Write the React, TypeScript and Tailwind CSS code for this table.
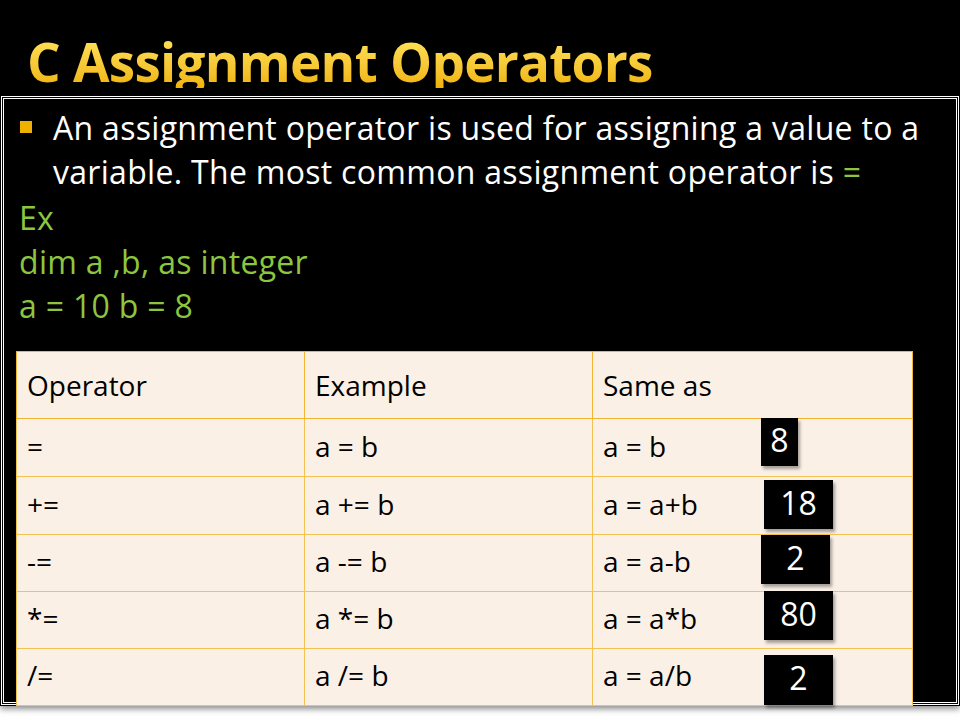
const rows = [
  { op: "=", ex: "a = b", same: "a = b", h: "h-[58px]" },
  { op: "+=", ex: "a += b", same: "a = a+b", h: "h-[58px]" },
  { op: "-=", ex: "a -= b", same: "a = a-b", h: "h-[57px]" },
  { op: "*=", ex: "a *= b", same: "a = a*b", h: "h-[57px]" },
  { op: "/=", ex: "a /= b", same: "a = a/b", h: "h-[57px]" },
];

const Box = ({ value, className }: { value: string; className: string }) => (
  <div
    className={`absolute flex items-center justify-center bg-black text-white text-[32px] leading-none shadow-[2px_3px_3px_rgba(0,0,0,0.35)] ${className}`}
  >
    <span className="-mt-[4px]">{value}</span>
  </div>
);

const App = () => {
  return (
    <div className="w-[960px] h-[720px] bg-white overflow-hidden font-['Open_Sans','Lato',sans-serif]">
      <div className="h-[706px] bg-black shadow-[0_3px_6px_rgba(0,0,0,0.45)]">
        <div className="h-[96px] pt-[35px] pl-[27px]">
          <h1 className="text-[53px] leading-none font-bold tracking-[-0.75px] bg-gradient-to-b from-[#ffe45a] to-[#f0b400] bg-clip-text text-transparent">
            C Assignment Operators
          </h1>
        </div>

        <div className="ml-[1px] w-[958px] h-[609px] border-[3px] border-double border-white pt-[7px]">
          <div className="flex text-white text-[32px] leading-[44px] tracking-[0.3px]">
            <div className="w-[49px] shrink-0 pl-[16px] pt-[15px]">
              <div className="w-[12px] h-[12px] bg-[#f0b000]" />
            </div>
            <p>
              An assignment operator is used for assigning a value to a variable. The most common
              assignment operator is <span className="text-[#8cc63f]">=</span>
            </p>
          </div>

          <div className="mt-[2px] pl-[15px] text-[#8cc63f] text-[32px] leading-[44px] tracking-[0.3px]">
            <div>Ex</div>
            <div>dim a ,b, as integer</div>
            <div>a = 10 b = 8</div>
          </div>

          <div className="relative mt-[23px] ml-[12px] w-[896px]">
            <table className="w-[896px] border-collapse table-fixed bg-[#fbf0e6] text-black text-[28px]">
              <colgroup>
                <col className="w-[288px]" />
                <col className="w-[288px]" />
                <col className="w-[320px]" />
              </colgroup>
              <tbody>
                <tr className="h-[67px]">
                  {["Operator", "Example", "Same as"].map((t) => (
                    <td key={t} className="border border-[#f2b531] align-bottom pl-[10px] pb-[15px] leading-tight">
                      {t}
                    </td>
                  ))}
                </tr>
                {rows.map((r) => (
                  <tr key={r.op} className={r.h}>
                    {[r.op, r.ex, r.same].map((t, i) => (
                      <td key={i} className="border border-[#f5c352] align-bottom pl-[10px] pb-[12px] leading-tight">
                        {t}
                      </td>
                    ))}
                  </tr>
                ))}
              </tbody>
            </table>

            <Box value="8" className="left-[745px] top-[67px] w-[37px] h-[48px]" />
            <Box value="18" className="left-[748px] top-[129px] w-[69px] h-[49px]" />
            <Box value="2" className="left-[745px] top-[184px] w-[69px] h-[49px]" />
            <Box value="80" className="left-[748px] top-[240px] w-[69px] h-[49px]" />
            <Box value="2" className="left-[748px] top-[304px] w-[69px] h-[50px]" />
          </div>
        </div>
      </div>
    </div>
  );
};

export default App;
